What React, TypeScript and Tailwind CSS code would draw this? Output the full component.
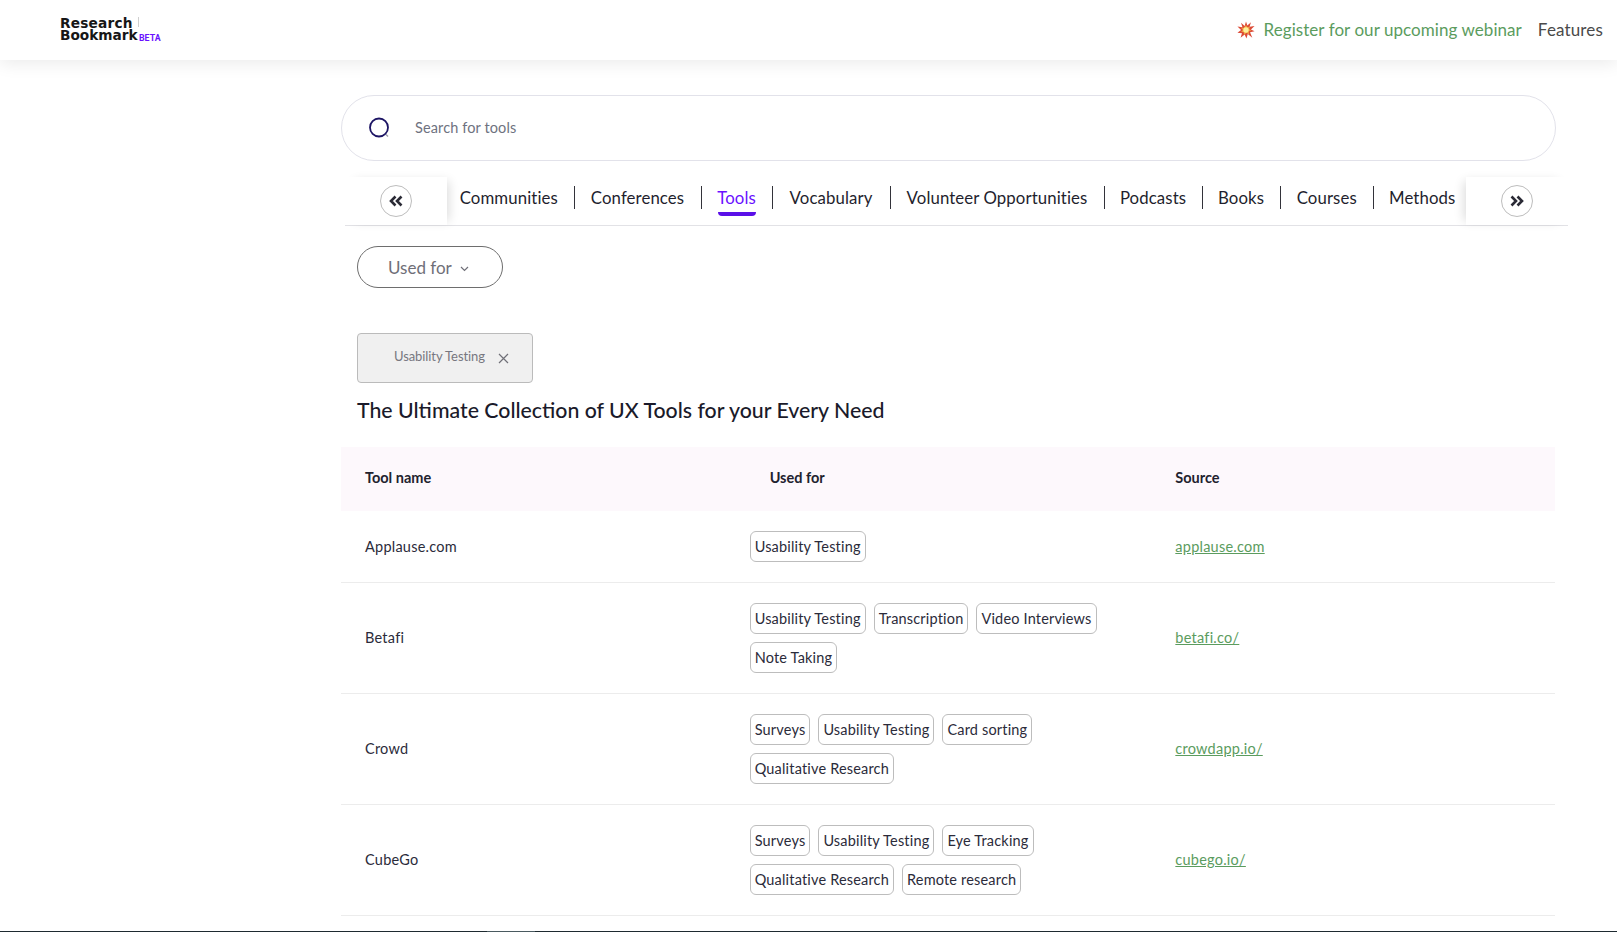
import React from "react";

const Chevrons = ({ dir }: { dir: "l" | "r" }) => (
  <svg width="14" height="12" viewBox="0 0 14 12" fill="none" stroke="#2a2a35" strokeWidth="2.6" strokeLinejoin="miter">
    {dir === "l" ? <path d="M6.5 1.5 2 6l4.5 4.5M12.5 1.5 8 6l4.5 4.5" /> : <path d="M1.5 1.5 6 6l-4.5 4.5M7.5 1.5 12 6l-4.5 4.5" />}
  </svg>
);

const Boom = () => (
  <svg width="18" height="18" viewBox="0 0 20 20" className="shrink-0">
    <polygon points="10,0.5 11.5,5 15.5,1.5 14,6.5 19.5,5.5 15.5,9.5 19.5,11.5 14.5,12.5 17,18.5 12,14.5 10.5,19.5 8.5,15 4,18.5 5.5,13.5 0.5,13 4.5,10 0.5,6 6,7 4.5,2 8.5,5.5" fill="#dc4a36" />
    <polygon points="10,4.5 11.5,7 14.5,6 13.5,9 16,10.5 13,11.5 13.5,15 10.5,13 8,15.5 7.5,12.5 4.5,12 6.5,10 4.5,7.5 7.5,7.5" fill="#f0a040" />
    <circle cx="10" cy="10" r="3" fill="#fdf09a" />
  </svg>
);

const tabs: [string, string][] = [
  ["Communities", "w-[127.5px] pr-[3px]"],
  ["Conferences", "w-[127px]"],
  ["Tools", "w-[71px]"],
  ["Vocabulary", "w-[118px]"],
  ["Volunteer Opportunities", "w-[214px]"],
  ["Podcasts", "w-[98px]"],
  ["Books", "w-[78px]"],
  ["Courses", "w-[93.5px]"],
];

const Chip = ({ label }: { label: string }) => (
  <span className="flex h-[31px] items-center rounded-[6px] border border-[#bdbdbd] px-[4px] text-[14.5px] tracking-[0.18px] text-[#2b2b3a] whitespace-nowrap">
    {label}
  </span>
);

const rows: { name: string; chips: string[]; link: string }[] = [
  { name: "Applause.com", chips: ["Usability Testing"], link: "applause.com" },
  { name: "Betafi", chips: ["Usability Testing", "Transcription", "Video Interviews", "Note Taking"], link: "betafi.co/" },
  { name: "Crowd", chips: ["Surveys", "Usability Testing", "Card sorting", "Qualitative Research"], link: "crowdapp.io/" },
  { name: "CubeGo", chips: ["Surveys", "Usability Testing", "Eye Tracking", "Qualitative Research", "Remote research"], link: "cubego.io/" },
];

export default function App() {
  return (
    <div className="flex h-[932px] flex-col overflow-hidden bg-white font-['Lato',sans-serif] text-[#1f1f2e]">
      <header className="relative z-10 flex h-[60px] shrink-0 items-center justify-between bg-white pl-[60px] pr-[14px] shadow-[0_4px_16px_rgba(0,0,0,0.08)]">
        <div className="relative mt-[-3px] flex flex-col font-['DejaVu_Sans',sans-serif] text-[13.7px] font-bold leading-[12px] text-[#161616]">
          <span className="tracking-[0.2px]">Research</span>
          <span>Bookmark</span>
          <span className="absolute left-[79px] top-[16px] font-['Roboto',sans-serif] text-[8.8px] font-bold leading-[10px] text-[#6a11ff]">BETA</span>
          <span className="absolute left-[78px] top-[0px] h-[10px] w-px bg-[#cfcfcf]" />
        </div>
        <div className="flex items-center">
          <Boom />
          <span className="ml-[9px] text-[17px] tracking-[0.06px] text-[#5b9c5e]">Register for our upcoming webinar</span>
          <span className="ml-[16px] text-[17px] tracking-[0.15px] text-[#4a4a4a]">Features</span>
        </div>
      </header>

      <div className="flex min-h-0 flex-1">
        <aside className="w-[341px] shrink-0" />
        <main className="flex w-[1227px] flex-col">
          <div className="mt-[35px] flex h-[66px] w-[1215px] items-center rounded-[33px] border border-[#e2e2ea] pl-[26px]">
            <svg width="24" height="24" viewBox="0 0 24 24" fill="none">
              <circle cx="11" cy="11.5" r="9" stroke="#1c1464" strokeWidth="1.8" />
              <path d="M18 18.5l2 2" stroke="#9a9aa8" strokeWidth="1.4" />
            </svg>
            <span className="ml-[23px] text-[14.5px] tracking-[0.12px] text-[#6e7280]">Search for tools</span>
          </div>

          <div className="ml-[4px] mt-[16px] flex h-[49px] w-[1223px] items-start border-b border-[#e2e2e6]">
            <div className="relative flex h-[48px] w-[102px] shrink-0 items-start justify-center pt-[8px] shadow-[6px_0_10px_-4px_rgba(0,0,0,0.14)]">
              <div className="flex h-[32px] w-[32px] items-center justify-center rounded-full border border-[#bdbdbd] bg-white">
                <Chevrons dir="l" />
              </div>
            </div>
            <div className="flex h-[48px] min-w-0 flex-1 items-start">
              {tabs.map(([t, w]) => (
                <div key={t} className={`${w} relative mt-[9px] flex h-[23px] shrink-0 items-center justify-center border-r border-[#33333a] text-[16.8px] tracking-[0.1px] ${t === "Tools" ? "text-[#6a11ff]" : "text-[#1f1f2e]"}`}>
                  {t}
                  {t === "Tools" && <span className="absolute bottom-[-7px] left-[16px] h-[4px] w-[38px] rounded-b-[4px] bg-[#5a0fe8]" />}
                </div>
              ))}
              <div className="mt-[9px] flex h-[23px] w-[92px] items-center pl-[15px] text-[16.8px] tracking-[0.1px] text-[#1f1f2e]">Methods</div>
            </div>
            <div className="flex h-[48px] w-[102px] shrink-0 items-start justify-start pl-[35px] pt-[8px] shadow-[-6px_0_10px_-4px_rgba(0,0,0,0.14)]">
              <div className="flex h-[32px] w-[32px] items-center justify-center rounded-full border border-[#bdbdbd] bg-white">
                <Chevrons dir="r" />
              </div>
            </div>
          </div>

          <button className="ml-[16px] mt-[20px] flex h-[42px] w-[146px] items-center rounded-[21px] border border-[#6e6e6e] pl-[30px] pt-[1px] text-[17px] text-[#6f6f78]">
            Used for
            <svg className="ml-[8px] mt-[2px]" width="9" height="6" viewBox="0 0 9 6" fill="none" stroke="#6f6f78" strokeWidth="1.2">
              <path d="M1 1l3.5 3.5L8 1" />
            </svg>
          </button>

          <div className="ml-[16px] mt-[45px] flex h-[50px] w-[176px] items-center rounded-[4px] border border-[#bbbbbb] bg-[#f0f0f0] pb-[2px] pl-[36px] text-[13px] tracking-[-0.08px] text-[#77777f]">
            Usability Testing
            <svg className="ml-[13px] mt-[2px]" width="11" height="11" viewBox="0 0 11 11" fill="none" stroke="#707078" strokeWidth="1.2">
              <path d="M1 1l9 9M10 1l-9 9" />
            </svg>
          </div>

          <h1 className="ml-[16px] mt-[14px] text-[21.3px] font-medium leading-[27px] text-[#1a1a2a]">
            The Ultimate Collection of UX Tools for your Every Need
          </h1>

          <div className="mt-[23px] w-[1214px]">
            <div className="grid h-[64px] grid-cols-3 items-center bg-[#fdf8fc] pb-[3px] text-[14.5px] font-bold text-[#22222e]">
              <span className="pl-[24px]">Tool name</span>
              <span className="pl-[24px]">Used for</span>
              <span className="pl-[25px]">Source</span>
            </div>
            {rows.map((r) => (
              <div key={r.name} className="grid grid-cols-3 items-center border-b-[1.5px] border-[#ececec] py-[20px] text-[14.5px] tracking-[0.24px]">
                <span className="pl-[24px] text-[#2b2b3a]">{r.name}</span>
                <div className="flex flex-wrap gap-x-[8px] gap-y-[8px] pl-[4px]">
                  {r.chips.map((c) => (
                    <Chip key={c} label={c} />
                  ))}
                </div>
                <a className="pl-[25px] text-[#5b9c5e] underline">{r.link}</a>
              </div>
            ))}
          </div>
        </main>
      </div>
      <div className="flex h-px shrink-0 bg-[#1e2a30]">
        <div className="ml-[487px] h-px w-[48px] bg-[#4a5a60]" />
      </div>
    </div>
  );
}
